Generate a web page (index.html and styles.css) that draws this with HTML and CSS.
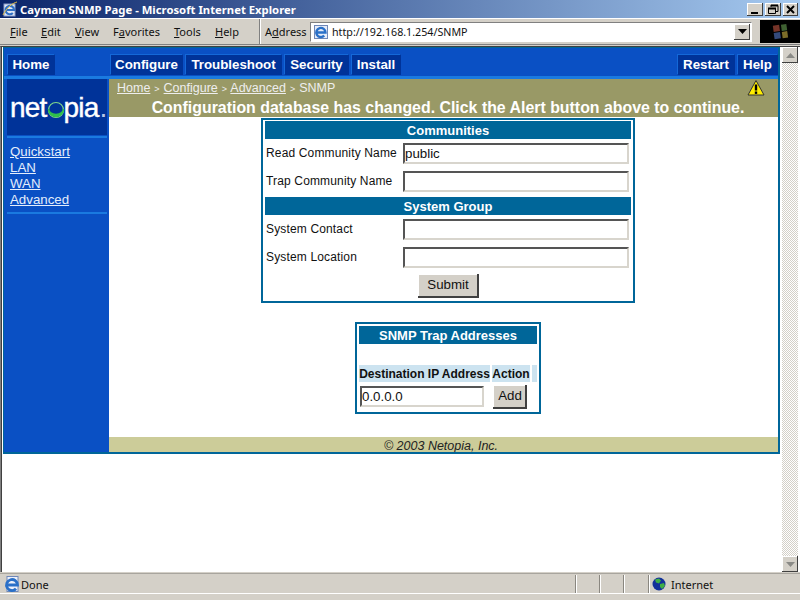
FILE: index.html
```html
<!DOCTYPE html>
<html lang="en">
<head>
<meta charset="utf-8">
<title>Cayman SNMP Page</title>
<link rel="stylesheet" href="styles.css">
</head>
<body>
<div class="window">
  <header class="titlebar">
    <svg class="ie-title" viewBox="0 0 16 16" width="16" height="16"><rect x="2" y="3" width="11" height="12" fill="#dfe6f5" stroke="#8a9cc8"/><path d="M4 9h8a4.200 4.200 0 1 0-1.200 3" fill="none" stroke="#2f6fc4" stroke-width="2.200"/><path d="M1 14C5 6 11 2 15 1" stroke="#e8c040" fill="none"/></svg>
    <span class="title-text">Cayman SNMP Page - Microsoft Internet Explorer</span>
    <div class="win-btns">
      <span class="win-btn"><svg viewBox="0 0 16 13" width="16" height="13"><rect x="4" y="9" width="7" height="2" fill="#000"/></svg></span>
      <span class="win-btn"><svg viewBox="0 0 16 13" width="16" height="13"><path d="M6 2.500h7v6h-2M6 2v2M3.500 5.500h7v5h-7z" fill="none" stroke="#000"/><path d="M6 2.500h7M3 5.500h8" stroke="#000" stroke-width="2" fill="none"/></svg></span>
      <span class="win-btn close"><svg viewBox="0 0 15 13" width="15" height="13"><path d="M4 3l7 7M11 3l-7 7" stroke="#000" stroke-width="2"/></svg></span>
    </div>
  </header>
  <nav class="menubar">
    <div class="menus">
      <span class="menu-file"><u>F</u>ile</span>
      <span class="menu-edit"><u>E</u>dit</span>
      <span class="menu-view"><u>V</u>iew</span>
      <span class="menu-fav">F<u>a</u>vorites</span>
      <span class="menu-tools"><u>T</u>ools</span>
      <span class="menu-help"><u>H</u>elp</span>
    </div>
    <div class="address">
      <span class="addr-label">A<u>d</u>dress</span>
      <div class="addr-box">
        <svg class="ie-small" viewBox="0 0 16 16" width="16" height="16"><rect x="1.500" y="1.500" width="13" height="13" fill="#e6ecf8" stroke="#7088b8"/><path d="M3.500 8.500h9a4.600 4.600 0 1 0-1.300 3.200" fill="none" stroke="#2a70c8" stroke-width="2.400"/></svg>
        <span class="addr-url">http://192.168.1.254/SNMP</span>
        <span class="addr-drop"><svg viewBox="0 0 9 5" width="9" height="5"><path d="M0 0h9L4.500 5z" fill="#000"/></svg></span>
      </div>
    </div>
    <div class="throbber">
      <svg viewBox="0 0 22 20" width="20" height="18"><path d="M3 3l7-1 1 7-7 1z" fill="#a84a3a"/><path d="M12 2l6-1 1 7-6 1z" fill="#5a8a48"/><path d="M4 11l7-1 1 7-7 1z" fill="#4a6ab0"/><path d="M13 10l6-1 1 7-6 1z" fill="#b09a3a"/></svg>
    </div>
  </nav>
  <div class="viewport">
    <div class="doc">
      <main class="page">
        <div class="topnav">
          <a class="tab tab-home">Home</a>
          <a class="tab tab-conf">Configure</a>
          <a class="tab tab-trbl">Troubleshoot</a>
          <a class="tab tab-sec">Security</a>
          <a class="tab tab-inst">Install</a>
          <a class="tab tab-rest">Restart</a>
          <a class="tab tab-help">Help</a>
        </div>
        <div class="columns">
          <aside class="side">
            <div class="logo">
              <span>net</span><svg class="logo-o" viewBox="0 0 18 18" width="18" height="18"><circle cx="9" cy="9" r="7.500" fill="none" stroke="#7fd68a" stroke-width="1.200"/><path d="M1.500 8a7.500 7.500 0 0 0 15 0a7.500 5.500 0 0 1-15 0z" fill="#2fc04a" stroke="#2fc04a" stroke-width="1.500"/></svg><span>pia</span><span class="logo-dot">.</span>
            </div>
            <ul class="side-links">
              <li><a>Quickstart</a></li>
              <li><a>LAN</a></li>
              <li><a>WAN</a></li>
              <li><a>Advanced</a></li>
            </ul>
          </aside>
          <div class="content">
            <div class="alert">
              <div class="crumbs">
                <span><a>Home</a> <small>&gt;</small> <a>Configure</a> <small>&gt;</small> <a>Advanced</a> <small>&gt;</small> SNMP</span>
                <svg class="warn" viewBox="0 0 18 18" width="18" height="18"><path d="M9 1.500L17 16H1z" fill="#ffee00" stroke="#333" stroke-width="1" stroke-linejoin="round"/><path d="M9 5.500v6" stroke="#000" stroke-width="2.400"/><rect x="7.800" y="12.500" width="2.400" height="2.400" fill="#000"/></svg>
              </div>
              <div class="alert-msg">Configuration database has changed. Click the Alert button above to continue.</div>
            </div>
            <div class="body">
              <form class="box box-main">
                <h2 class="band">Communities</h2>
                <div class="field"><label>Read Community Name</label><span class="input">public</span></div>
                <div class="field"><label>Trap Community Name</label><span class="input"></span></div>
                <h2 class="band band-sys">System Group</h2>
                <div class="field"><label>System Contact</label><span class="input"></span></div>
                <div class="field"><label>System Location</label><span class="input"></span></div>
                <div class="submit-row"><span class="btn btn-submit">Submit</span></div>
              </form>
              <form class="box box-trap">
                <h2 class="band">SNMP Trap Addresses</h2>
                <div class="trap-head"><span class="th-ip">Destination IP Address</span><span class="th-act">Action</span><span class="th-end"></span></div>
                <div class="trap-row"><span class="input input-ip">0.0.0.0</span><span class="btn btn-add">Add</span></div>
              </form>
            </div>
            <footer class="copyright">© 2003 Netopia, Inc.</footer>
          </div>
        </div>
      </main>
    </div>
    <div class="scrollbar">
      <span class="sb-btn"><svg viewBox="0 0 9 5" width="9" height="5"><path d="M4.500 0L9 5H0z" fill="#8a8a86"/></svg></span>
      <span class="sb-track"></span>
      <span class="sb-btn"><svg viewBox="0 0 9 5" width="9" height="5"><path d="M0 0h9L4.500 5z" fill="#8a8a86"/></svg></span>
    </div>
  </div>
  <div class="statusbar">
    <svg class="ie-status" viewBox="0 0 18 18" width="18" height="18"><rect x="4" y="1.500" width="11" height="15" fill="#eef1fa" stroke="#7088b8"/><path d="M3.500 10h11a5.500 5.500 0 1 0-1.500 3.800" fill="none" stroke="#2a70c8" stroke-width="2.800"/></svg>
    <span class="st-done">Done</span>
    <span class="st-cell"></span><span class="st-cell"></span><span class="st-cell"></span>
    <span class="st-zone">
      <svg viewBox="0 0 14 14" width="14" height="14"><circle cx="7" cy="7" r="6.500" fill="#12309a"/><path d="M3 2.500l4-1 2 2-2 3-3-1zM8 7l4-1 1 3-3 3-2-2z" fill="#3fae46"/></svg>
      <span class="st-zone-label">Internet</span>
    </span>
  </div>
</div>
</body>
</html>
```
FILE: styles.css
```css
* { box-sizing: border-box; }
html, body { margin: 0; padding: 0; }
body { width: 800px; height: 600px; overflow: hidden; background: #d4d0c8; font-family: "Liberation Sans", Arial, sans-serif; }
a { color: inherit; }
.window { width: 800px; height: 600px; display: flex; flex-direction: column; background: #d4d0c8; }

/* title bar */
.titlebar { height: 18px; flex: none; display: flex; align-items: center; padding: 0 2px; background: linear-gradient(90deg, #0a246a 0%, #a6caf0 100%); }
.ie-title { flex: none; }
.title-text { margin-left: 2px; color: #fff; font: bold 11.300px "Noto Sans", sans-serif; white-space: nowrap; }
.win-btns { margin-left: auto; display: flex; gap: 2px; }
.win-btn { width: 16px; height: 13px; background: #d4d0c8; box-shadow: inset -1px -1px 0 #404040, inset 1px 1px 0 #fff; display: block; }
.win-btn svg { display: block; }
.win-btn.close { width: 15px; }

/* menu bar */
.menubar { height: 27px; flex: none; display: flex; align-items: center; border-top: 1px solid #fff; border-bottom: 1px solid #808080; font: 11px "Noto Sans", sans-serif; color: #111; }
.menus { width: 260px; height: 100%; flex: none; display: flex; align-items: center; padding-left: 10px; border-right: 1px solid #808080; box-shadow: 1px 0 0 #fff; }
.menu-file { width: 31px; }
.menu-edit { width: 34px; }
.menu-view { width: 38px; }
.menu-fav { width: 61px; }
.menu-tools { width: 41px; }
.address { flex: 1; height: 100%; display: flex; align-items: center; padding-left: 4px; }
.addr-label { width: 46px; flex: none; padding-left: 1px; }
.addr-box { width: 442px; height: 20px; background: #fff; display: flex; align-items: center; padding: 0 1px 0 2px; border: 1px solid; border-color: #808080 #fff #fff #808080; }
.ie-small { flex: none; }
.addr-url { margin-left: 3px; font-size: 10.700px; }
.addr-drop { margin-left: auto; width: 16px; height: 16px; background: #d4d0c8; box-shadow: inset -1px -1px 0 #404040, inset 1px 1px 0 #fff; display: flex; align-items: center; justify-content: center; }
.throbber { width: 40px; height: 23px; flex: none; margin-left: 8px; background: #000; display: flex; align-items: center; justify-content: center; }
.throbber svg { opacity: .7; }

/* viewport */
.viewport { flex: none; height: 526px; display: flex; background: #fff; border-top: 1px solid #404040; border-left: 1px solid #808080; margin-top: 1px; }
.doc { flex: 1; min-width: 0; background: #fff; padding: 0 0 0 1px; border-left: 1px solid #404040; }
.page { width: 777px; height: 407px; border: 1px solid #006699; border-width: 1px 2px 2px 1px; display: flex; flex-direction: column; background: #0a55c8; }

/* top nav */
.topnav { height: 31px; flex: none; display: flex; gap: 2px; align-items: flex-start; padding: 6px 0 0 3px; background: #0a50c4; border-bottom: 3px solid #1a7ae0; }
.tab { height: 21px; display: block; background: #003399; color: #fff; font: bold 13.300px/20px "Liberation Sans", sans-serif; text-align: center; border: 1px solid; border-color: #1468d8 #003399 #003399 #1468d8; white-space: nowrap; }
.tab-home { width: 48px; margin-right: 53px; }
.tab-conf { width: 73px; }
.tab-trbl { width: 97px; }
.tab-sec { width: 65px; }
.tab-inst { width: 50px; }
.tab-rest { width: 58px; margin-left: auto; }
.tab-help { width: 41px; }

/* sidebar */
.columns { flex: 1; min-height: 0; display: flex; }
.side { width: 105px; flex: none; background: #0a50c4; padding-left: 3px; }
.logo { width: 100px; height: 56px; background: #003399; display: flex; align-items: center; padding: 1px 0 0 3px; color: #fff; font: 28px/1 "Liberation Sans", sans-serif; letter-spacing: -.8px; -webkit-text-stroke: .4px #fff; box-shadow: 0 1px 0 #0a50c4, 0 3px 0 #1a7ae0; }
.logo-o { flex: none; margin: 4px -1px 0 0; }
.logo-dot { margin-left: 1px; color: #b8c8e8; -webkit-text-stroke: 0; }
.side-links { width: 100px; margin: 9px 0 0; padding: 0 0 4px 3px; list-style: none; color: #e4eefc; font: 13.300px/16px "Liberation Sans", sans-serif; border-bottom: 2px solid #1a7ae0; }
.side-links a { text-decoration: underline; }

/* content */
.content { flex: 1; min-width: 0; display: flex; flex-direction: column; background: #fff; }
.alert { height: 38px; flex: none; background: #999966; color: #fff; }
.crumbs { height: 19px; display: flex; justify-content: space-between; padding: 0 13px 0 8px; font: 12.500px/19px "Liberation Sans", sans-serif; color: #eee; }
.crumbs a { text-decoration: underline; }
.crumbs small { font-size: 9px; padding: 0 .5px; }
.alert-msg { font: bold 15.900px/19px "Liberation Sans", sans-serif; text-align: center; padding-left: 9px; white-space: nowrap; }

.body { flex: 1; display: flex; flex-direction: column; align-items: center; }
.box { border: 2px solid #006699; padding: 1px; background: #fff; }
.box-main { width: 374px; height: 185px; margin: 1px 0 0 9px; padding: 1px 2px; }
.box-trap { width: 186px; height: 92px; margin: 19px 0 0 9px; padding: 2px; }
.band { height: 18px; margin: 0; background: #006699; color: #fff; font: bold 13px/19px "Liberation Sans", sans-serif; text-align: center; }
.field { height: 28px; display: flex; align-items: flex-start; padding: 4px 2px 0 2px; font: 12px/21px "Liberation Sans", sans-serif; color: #111; }
.field label { width: 136px; flex: none; margin-left: -1px; margin-right: 1px; letter-spacing: .15px; }
.input { display: block; height: 21px; flex: 1; background: #fff; border: 2px solid; border-color: #555 #d8d5cd #d8d5cd #555; font: 13.300px/18px "Liberation Sans", sans-serif; color: #111; }
.band-sys { margin-top: 2px; }
.submit-row { display: flex; justify-content: center; padding-top: 3px; }
.btn { display: block; background: #d4d0c8; color: #111; font: 13.300px/22px "Liberation Sans", sans-serif; text-align: center; box-shadow: inset -2px -2px 0 #404040, inset 1px 1px 0 #fff; }
.btn-submit { width: 61px; height: 24px; }
.trap-head { margin-top: 21px; height: 17px; display: flex; gap: 2px; font: bold 12px/18px "Liberation Sans", sans-serif; color: #111; white-space: nowrap; }
.trap-head span { background: #cce3f0; display: block; }
.th-ip { width: 131px; text-align: center; }
.th-act { width: 38px; text-align: center; }
.th-end { width: 5px; }
.trap-row { display: flex; align-items: flex-start; padding: 3px 0 0 1px; }
.input-ip { flex: none; width: 124px; margin-top: 1px; }
.btn-add { width: 34px; height: 24px; margin-left: 9px; }
.copyright { height: 15px; flex: none; background: #cccc99; color: #222; font: italic 12.500px/18px "Liberation Sans", sans-serif; text-align: center; padding-right: 5px; overflow: hidden; }

/* scrollbar */
.scrollbar { width: 19px; flex: none; display: flex; flex-direction: column; padding: 0 2px 0 1px; background: #fff; }
.sb-track { flex: 1; background: repeating-conic-gradient(#d4d0c8 0 25%, #fff 0 50%) 0 0 / 2px 2px; }
.sb-btn { height: 16px; flex: none; background: #d4d0c8; box-shadow: inset -1px -1px 0 #404040, inset 1px 1px 0 #fff; display: flex; align-items: center; justify-content: center; }

/* status bar */
.statusbar { height: 19px; flex: none; margin-top: 1px; display: flex; align-items: center; padding-left: 3px; border-top: 1px solid #a8a59e; border-bottom: 1px solid #fff; font: 11px "Noto Sans", sans-serif; color: #111; box-sizing: content-box; }
.ie-status { flex: none; }
.st-done { width: 554px; padding-top: 2px; }
.st-zone-label { padding-top: 2px; }
.st-cell { width: 24px; height: 18px; border-left: 1px solid #8a8780; box-shadow: inset 1px 0 0 #fff; }
.st-zone { flex: 1; height: 18px; margin-left: 1px; display: flex; align-items: center; gap: 5px; padding-left: 3px; border-left: 1px solid #8a8780; box-shadow: inset 1px 0 0 #fff; }
```
